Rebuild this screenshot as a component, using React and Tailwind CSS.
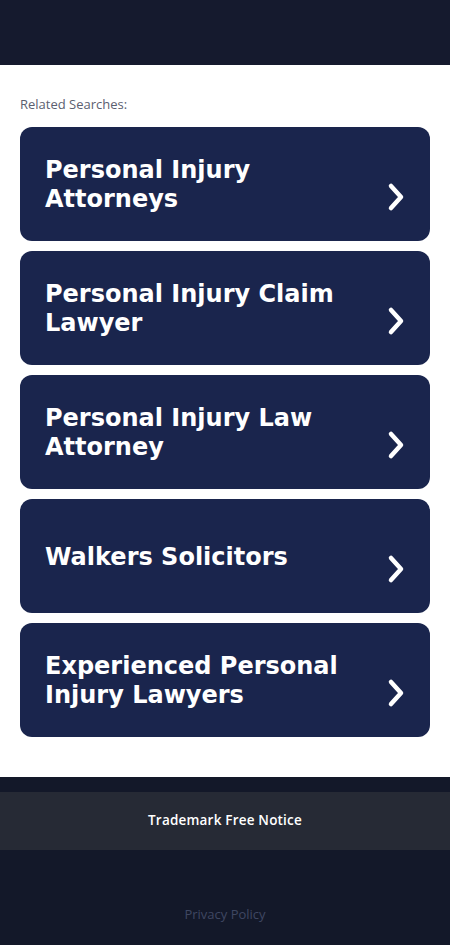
import React from 'react';

const searches = [
  'Personal Injury Attorneys',
  'Personal Injury Claim Lawyer',
  'Personal Injury Law Attorney',
  'Walkers Solicitors',
  'Experienced Personal Injury Lawyers',
];

const Chevron = () => (
  <svg width="20" height="30" viewBox="0 0 20 30" fill="none" className="mt-[26px] shrink-0">
    <path d="M5 4 L15 15 L5 26" stroke="#ffffff" strokeWidth="4.5" strokeLinecap="round" strokeLinejoin="round" />
  </svg>
);

export default function App() {
  return (
    <div className="min-h-screen flex flex-col bg-white">
      {/* header */}
      <div className="h-[65px] bg-[#151a2e]" />

      <main className="px-5 pt-[30px] pb-10">
        <p className="text-[13px] text-[#5b6070] mb-[12px]" style={{ fontFamily: '"Open Sans", sans-serif' }}>
          Related Searches:
        </p>
        <div className="flex flex-col gap-[10px]">
          {searches.map((s) => (
            <a
              key={s}
              href="#"
              className="h-[114px] rounded-[12px] bg-[#1a254d] flex items-center pl-[25px] pr-[24px]"
            >
              <span
                className="flex-1 text-white font-bold text-[24px] leading-[29px] pr-6 pt-[3px]"
                style={{ fontFamily: '"DejaVu Sans", sans-serif' }}
              >
                {s}
              </span>
              <Chevron />
            </a>
          ))}
        </div>
      </main>

      <footer className="bg-[#131829] pt-[15px] flex-1 flex flex-col" style={{ fontFamily: '"Open Sans", sans-serif' }}>
        <div className="h-[58px] bg-[#262a35] flex items-center justify-center">
          <span className="text-white text-[13.5px] font-semibold tracking-[0.2px]">Trademark Free Notice</span>
        </div>
        <div className="h-[95px] flex items-end justify-center pb-[20px]">
          <a href="#" className="text-[13px] text-[#3f4762]">Privacy Policy</a>
        </div>
      </footer>
    </div>
  );
}
